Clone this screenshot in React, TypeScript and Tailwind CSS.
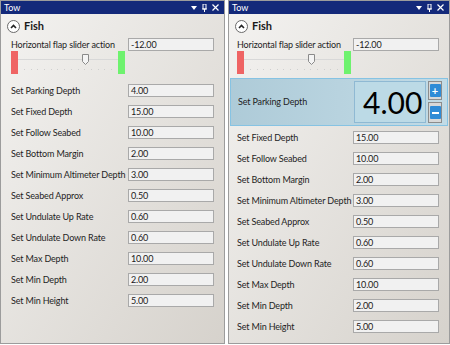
import React from "react";

const font = { fontFamily: 'Lato, "Noto Sans", sans-serif' };

function TitleBar() {
  return (
    <div className="h-[13px] bg-[#13297a] flex items-center justify-between px-[2px] text-white text-[9px] leading-none">
      <span className="pl-[1px]">Tow</span>
      <div className="flex items-center gap-[5px] pr-[3px]">
        <svg width="6" height="4" viewBox="0 0 6 4"><path d="M0 0h6L3 4z" fill="#fff" /></svg>
        <svg width="5" height="8" viewBox="0 0 5 8"><path d="M1 0h3v5H1z M0 5h5 M2.5 5v3" stroke="#fff" strokeWidth="1" fill="none" /></svg>
        <svg width="7" height="7" viewBox="0 0 7 7"><path d="M0.5 0.5l6 6M6.5 0.5l-6 6" stroke="#fff" strokeWidth="1.2" /></svg>
      </div>
    </div>
  );
}

function FishHeader() {
  return (
    <div className="h-[24px] flex items-center pl-[6px] gap-[4px]">
      <div className="w-[13px] h-[13px] rounded-full border border-[#6a6a6a] bg-white flex items-center justify-center">
        <svg width="7" height="5" viewBox="0 0 7 5"><path d="M1 4L3.5 1.5L6 4" stroke="#222" strokeWidth="1.6" fill="none" /></svg>
      </div>
      <span className="text-[11px] font-bold text-[#1a1a1a]">Fish</span>
    </div>
  );
}

function Box({ v }: { v: string }) {
  return (
    <div className="w-[86px] h-[13px] border border-[#a9a9a9] bg-[#f1f1f1] text-[9px] leading-[11px] pl-[2px] text-[#1a1a1a] tracking-[-0.15px]">
      {v}
    </div>
  );
}

function Row({ label, v, lw, pl }: { label: string; v: string; lw: string; pl: string }) {
  return (
    <div className="h-[21px] flex items-center">
      <div className={`${lw} ${pl} text-[9px] text-[#1e1e1e] whitespace-nowrap tracking-[-0.15px]`}>{label}</div>
      <Box v={v} />
    </div>
  );
}

function Slider({ lw, pl }: { lw: string; pl: string }) {
  return (
    <div>
      <div className="h-[13px] flex items-center">
        <div className={`${lw} ${pl} text-[9px] text-[#1e1e1e] whitespace-nowrap tracking-[-0.15px]`}>Horizontal flap slider action</div>
        <Box v="-12.00" />
      </div>
      <div className={`h-[24px] flex ${pl}`}>
        <div className="w-[7px] h-[23px] bg-[#ef6464]" />
        <div className="relative w-[100px] h-[23px]">
          <div className="absolute left-0 right-0 top-[8px] h-[1px] bg-[#d8d8d8]" />
          <div className="absolute left-0 right-0 top-[18px] flex justify-between px-[6px]">
            {Array.from({ length: 14 }).map((_, i) => (
              <div key={i} className="w-[1px] h-[1px] bg-[#cfcfcf]" />
            ))}
          </div>
          <svg className="absolute left-[64px] top-[3px]" width="7" height="11" viewBox="0 0 7 11">
            <path d="M0.5 0.5h6v7l-3 3l-3-3z" fill="#f4f4f4" stroke="#8a8a8a" />
          </svg>
        </div>
        <div className="w-[7px] h-[23px] bg-[#6ef26e]" />
      </div>
    </div>
  );
}

const rest: [string, string][] = [
  ["Set Follow Seabed", "10.00"],
  ["Set Bottom Margin", "2.00"],
  ["Set Minimum Altimeter Depth", "3.00"],
  ["Set Seabed Approx", "0.50"],
  ["Set Undulate Up Rate", "0.60"],
  ["Set Undulate Down Rate", "0.60"],
  ["Set Max Depth", "10.00"],
  ["Set Min Depth", "2.00"],
  ["Set Min Height", "5.00"],
];

function LeftPanel() {
  const lw = "w-[127px]";
  const pl = "pl-[10px]";
  return (
    <div className="w-[225px] h-[344px] border border-[#9c9c9c] flex flex-col bg-linear-to-br from-[#f4f3f1] to-[#d6d2cc]">
      <TitleBar />
      <FishHeader />
      <Slider lw={lw} pl={pl} />
      <div className="h-[5px]" />
      <Row lw={lw} pl={pl} label="Set Parking Depth" v="4.00" />
      <Row lw={lw} pl={pl} label="Set Fixed Depth" v="15.00" />
      {rest.map(([l, v]) => (
        <Row lw={lw} pl={pl} key={l} label={l} v={v} />
      ))}
    </div>
  );
}

function RightPanel() {
  const lw = "w-[124px]";
  const pl = "pl-[8px]";
  return (
    <div className="w-[222px] h-[344px] border border-[#9c9c9c] flex flex-col bg-linear-to-br from-[#f4f3f1] to-[#d6d2cc]">
      <TitleBar />
      <FishHeader />
      <Slider lw={lw} pl={pl} />
      <div className="mx-[1px] mt-[3px] h-[48px] border border-[#86c3e3] bg-linear-to-r from-[#aecbd8] to-[#c2dbe6] flex items-center">
        <div className="w-[123px] pl-[7px] text-[9px] text-[#1e1e1e] tracking-[-0.15px]">Set Parking Depth</div>
        <div className="w-[72px] h-[42px] border border-[#8fb9d3] bg-[#bcdae6] flex items-center pl-[8px] text-[30px] leading-none text-black">4.00</div>
        <div className="ml-[2px] h-[42px] w-[14px] flex flex-col justify-between">
          <div className="h-[19px] border border-[#8c8c8c] bg-[#d8d8d8] flex items-center justify-center">
            <div className="w-[11px] h-[13px] bg-[#2f8bd6] rounded-[1px] flex items-center justify-center text-white text-[11px] leading-none font-bold">+</div>
          </div>
          <div className="h-[21px] border border-[#8c8c8c] bg-[#d8d8d8] flex items-center justify-center">
            <div className="w-[11px] h-[13px] bg-[#2f8bd6] rounded-[1px] flex items-center justify-center">
              <div className="w-[7px] h-[2px] bg-white" />
            </div>
          </div>
        </div>
      </div>
      <div className="h-[1px]" />
      <Row lw={lw} pl={pl} label="Set Fixed Depth" v="15.00" />
      {rest.map(([l, v]) => (
        <Row lw={lw} pl={pl} key={l} label={l} v={v} />
      ))}
    </div>
  );
}

export default function App() {
  return (
    <div className="w-[450px] h-[345px] bg-white flex gap-[3px] pt-0" style={font}>
      <LeftPanel />
      <RightPanel />
    </div>
  );
}
